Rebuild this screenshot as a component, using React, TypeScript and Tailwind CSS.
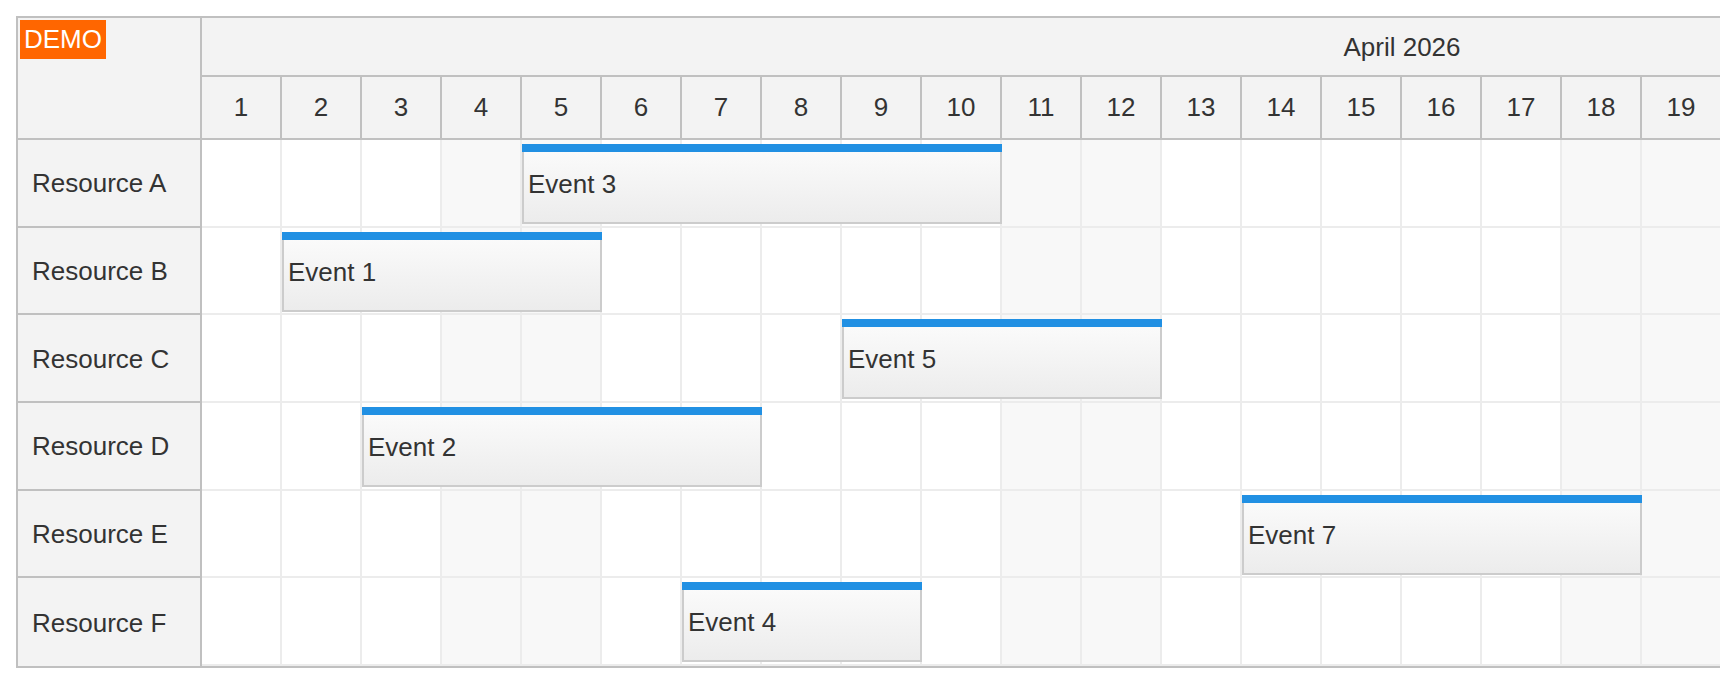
import React from 'react';

const DAYS = Array.from({ length: 30 }, (_, i) => i + 1);
const WEEKEND = [4, 5, 11, 12, 18, 19, 25, 26];

interface Ev {
  text: string;
  start: number;
  span: number;
}

const ROWS: { name: string; event: Ev }[] = [
  { name: 'Resource A', event: { text: 'Event 3', start: 5, span: 6 } },
  { name: 'Resource B', event: { text: 'Event 1', start: 2, span: 4 } },
  { name: 'Resource C', event: { text: 'Event 5', start: 9, span: 4 } },
  { name: 'Resource D', event: { text: 'Event 2', start: 3, span: 5 } },
  { name: 'Resource E', event: { text: 'Event 7', start: 14, span: 5 } },
  { name: 'Resource F', event: { text: 'Event 4', start: 7, span: 3 } },
];

const CELL = 80;

function EventBox({ ev }: { ev: Ev }) {
  return (
    <div
      className="absolute top-[4px] h-[80px] border-2 border-t-0 border-[#cccccc] bg-linear-to-b from-[#fcfcfc] to-[#ececec] flex items-center pl-[4px] pt-[2px]"
      style={{ left: (ev.start - 1) * CELL, width: ev.span * CELL }}
    >
      <div className="absolute top-0 -left-[2px] -right-[2px] h-[8px] bg-[#2190e3]" />
      <span className="text-[26px] text-[#333333] leading-none whitespace-nowrap">{ev.text}</span>
    </div>
  );
}

export default function App() {
  return (
    <div
      className="w-[1720px] h-[686px] overflow-hidden bg-white pt-[16px] pl-[16px]"
      style={{ fontFamily: '"Liberation Sans", Arial, sans-serif' }}
    >
      <div className="flex w-max border-t-2 border-l-2 border-b-2 border-[#c0c0c0] text-[#333333]">
        {/* row headers */}
        <div className="w-[184px] shrink-0 border-r-2 border-[#c0c0c0] bg-[#f3f3f3]">
          <div className="relative h-[122px] border-b-2 border-[#c0c0c0]">
            <div className="absolute top-[2px] left-[2px] bg-[#ff6600] text-white text-[26px] leading-[39px] px-[4px]">
              DEMO
            </div>
          </div>
          {ROWS.map((r, i) => (
            <div
              key={r.name}
              className={`h-[87.67px] flex items-center pl-[14px] pt-[2px] text-[26px] ${
                i < ROWS.length - 1 ? 'border-b-2 border-[#c0c0c0]' : ''
              }`}
            >
              {r.name}
            </div>
          ))}
        </div>

        {/* timeline */}
        <div className="w-[2400px] shrink-0">
          <div className="h-[59px] border-b-2 border-[#c0c0c0] bg-[#f3f3f3] flex items-center justify-center pt-[2px] text-[26px]">
            April 2026
          </div>
          <div className="h-[63px] border-b-2 border-[#c0c0c0] bg-[#f3f3f3] flex">
            {DAYS.map((d) => (
              <div
                key={d}
                className="w-[80px] shrink-0 border-r-2 border-[#c0c0c0] flex items-center justify-center text-[26px]"
              >
                {d}
              </div>
            ))}
          </div>
          {ROWS.map((r) => (
            <div key={r.name} className="relative h-[87.67px] flex border-b-2 border-[#ececec]">
              {DAYS.map((d) => (
                <div
                  key={d}
                  className={`w-[80px] shrink-0 border-r-2 border-[#ececec] ${
                    WEEKEND.includes(d) ? 'bg-[#f8f8f8]' : 'bg-white'
                  }`}
                />
              ))}
              <EventBox ev={r.event} />
            </div>
          ))}
        </div>
      </div>
    </div>
  );
}
